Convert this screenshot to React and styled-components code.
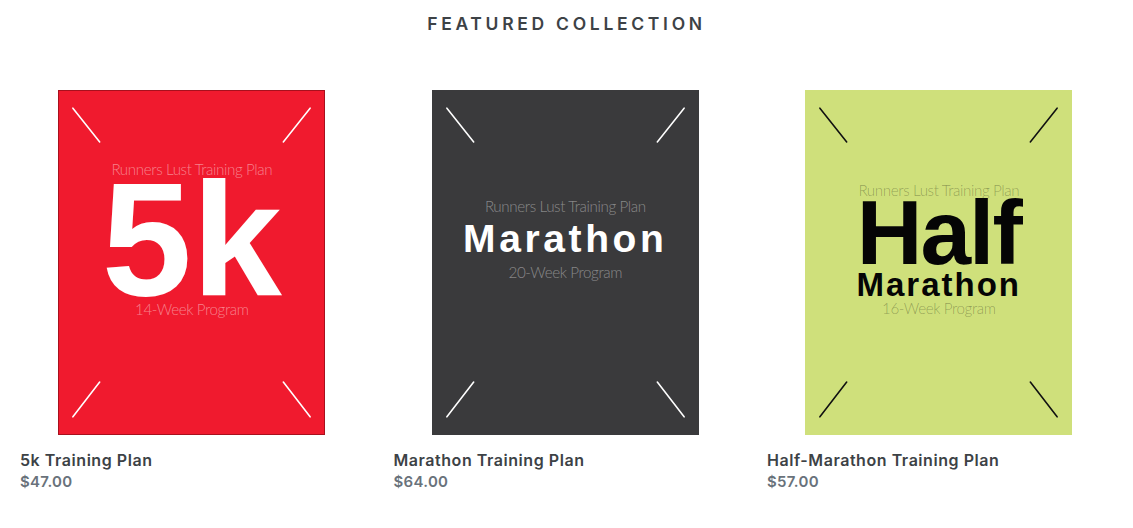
import React from "react";
import styled, { createGlobalStyle } from "styled-components";

const Global = createGlobalStyle`
  html, body { margin: 0; padding: 0; background: #ffffff; }
  body { font-family: Inter, "Liberation Sans", sans-serif; }
`;

const Section = styled.section`
  padding: 12px 20px 0 20px;
`;

const Heading = styled.h2`
  margin: 0 0 54px 0;
  text-align: center;
  font-family: Inter, "Liberation Sans", sans-serif;
  font-weight: 600;
  font-size: 17.5px;
  line-height: 24px;
  letter-spacing: 3.7px;
  text-transform: uppercase;
  color: #3d4246;
`;

const Grid = styled.div`
  display: grid;
  grid-template-columns: repeat(3, 343.5px);
  column-gap: 30px;
`;

const Card = styled.a`
  display: flex;
  flex-direction: column;
  text-decoration: none;
`;

const ImageWrap = styled.div`
  display: flex;
  justify-content: center;
`;

const Cover = styled.div`
  position: relative;
  box-sizing: border-box;
  width: 267px;
  height: 345px;
  background: ${(p) => p.$bg};
  border: 1px solid ${(p) => p.$edge};
  display: flex;
  flex-direction: column;
  align-items: center;
  padding-top: ${(p) => p.$top}px;
  overflow: hidden;
`;

const Corners = styled.svg`
  position: absolute;
  inset: 0;
  width: 100%;
  height: 100%;
  pointer-events: none;
`;

const Kicker = styled.div`
  font-family: Lato, "Liberation Sans", sans-serif;
  font-weight: 300;
  font-size: 15.2px;
  line-height: 14px;
  letter-spacing: -0.4px;
  white-space: nowrap;
  color: ${(p) => p.$color};
`;

const Big = styled.div`
  font-family: "Liberation Sans", Arial, sans-serif;
  font-weight: 700;
  font-size: ${(p) => p.$size}px;
  line-height: ${(p) => p.$lh}px;
  letter-spacing: ${(p) => p.$ls}px;
  white-space: nowrap;
  color: ${(p) => p.$color};
`;

const ProductTitle = styled.div`
  margin-top: 15px;
  font-family: Inter, "Liberation Sans", sans-serif;
  font-weight: 600;
  font-size: 16px;
  line-height: 21px;
  letter-spacing: 0.55px;
  color: #3d4246;
`;

const Price = styled.div`
  font-family: Inter, "Liberation Sans", sans-serif;
  font-weight: 600;
  font-size: 15px;
  line-height: 21px;
  letter-spacing: 0.3px;
  color: #69727b;
`;

function CornerLines({ color }) {
  return (
    <Corners viewBox="0 0 267 345">
      <g stroke={color} strokeWidth="1.6" strokeLinecap="round">
        <line x1="14" y1="17" x2="41" y2="51" />
        <line x1="253" y1="17" x2="226" y2="51" />
        <line x1="41" y1="293" x2="14" y2="328" />
        <line x1="226" y1="293" x2="253" y2="328" />
      </g>
    </Corners>
  );
}

export default function App() {
  return (
    <>
      <Global />
      <Section>
        <Heading>Featured collection</Heading>
        <Grid>
          <Card href="#">
            <ImageWrap>
              <Cover $bg="#f01a2e" $edge="#a8101d" $top={71}>
                <CornerLines color="#ffffff" />
                <Kicker $color="rgba(255,255,255,0.45)">Runners Lust Training Plan</Kicker>
                <Big $size={162} $lh={126} $ls={0} $color="#ffffff">5k</Big>
                <Kicker $color="rgba(255,255,255,0.45)">14-Week Program</Kicker>
              </Cover>
            </ImageWrap>
            <ProductTitle>5k Training Plan</ProductTitle>
            <Price>$47.00</Price>
          </Card>
          <Card href="#">
            <ImageWrap>
              <Cover $bg="#3a3a3c" $edge="#3a3a3c" $top={108}>
                <CornerLines color="#ffffff" />
                <Kicker $color="rgba(255,255,255,0.4)">Runners Lust Training Plan</Kicker>
                <Big $size={39} $lh={52} $ls={3.6} $color="#ffffff">Marathon</Big>
                <Kicker $color="rgba(255,255,255,0.4)">20-Week Program</Kicker>
              </Cover>
            </ImageWrap>
            <ProductTitle>Marathon Training Plan</ProductTitle>
            <Price>$64.00</Price>
          </Card>
          <Card href="#">
            <ImageWrap>
              <Cover $bg="#cfe07b" $edge="#cfe07b" $top={92}>
                <CornerLines color="#111111" />
                <Kicker $color="rgba(0,0,0,0.3)">Runners Lust Training Plan</Kicker>
                <Big $size={91} $lh={72} $ls={-2} $color="#050505">Half</Big>
                <Big $size={33} $lh={32} $ls={2} $color="#050505">Marathon</Big>
                <Kicker $color="rgba(0,0,0,0.3)">16-Week Program</Kicker>
              </Cover>
            </ImageWrap>
            <ProductTitle>Half-Marathon Training Plan</ProductTitle>
            <Price>$57.00</Price>
          </Card>
        </Grid>
      </Section>
    </>
  );
}
